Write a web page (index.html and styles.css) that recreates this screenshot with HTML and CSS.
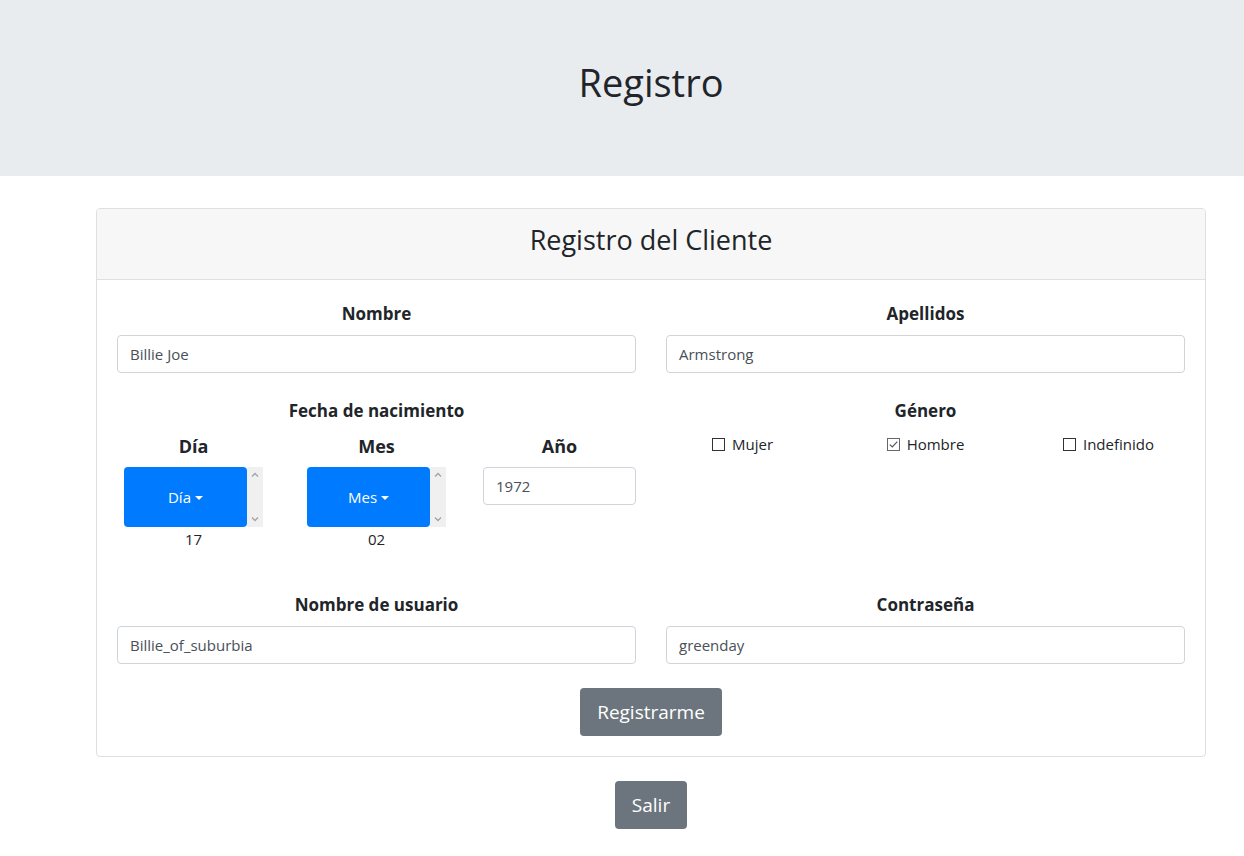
FILE: index.html
```html
<!DOCTYPE html>
<html lang="es">
<head>
<meta charset="utf-8">
<title>Registro</title>
<link rel="stylesheet" href="styles.css">
</head>
<body>
<header class="jumbotron">
  <h1 class="jumbo-title">Registro</h1>
</header>
<main class="page">
  <section class="card">
    <div class="card-header"><h2 class="card-title">Registro del Cliente</h2></div>
    <div class="card-body">
      <div class="row">
        <div class="col">
          <label class="label">Nombre</label>
          <div class="form-control">Billie Joe</div>
        </div>
        <div class="col">
          <label class="label">Apellidos</label>
          <div class="form-control">Armstrong</div>
        </div>
      </div>
      <div class="row row-date">
        <div class="col">
          <label class="label">Fecha de nacimiento</label>
          <div class="subrow">
            <div class="subcol">
              <div class="sublabel">Día</div>
              <div class="scrollbox">
                <button class="dropdown-btn">Día<span class="caret"></span></button>
                <div class="fake-scroll">
                  <svg width="16" height="60" viewBox="0 0 16 60"><path d="M5 9.5 L8 6.5 L11 9.5" fill="none" stroke="#a3a3a3" stroke-width="1.3"/><path d="M5 50.5 L8 53.5 L11 50.5" fill="none" stroke="#a3a3a3" stroke-width="1.3"/></svg>
                </div>
              </div>
              <div class="value">17</div>
            </div>
            <div class="subcol">
              <div class="sublabel">Mes</div>
              <div class="scrollbox">
                <button class="dropdown-btn">Mes<span class="caret"></span></button>
                <div class="fake-scroll">
                  <svg width="16" height="60" viewBox="0 0 16 60"><path d="M5 9.5 L8 6.5 L11 9.5" fill="none" stroke="#a3a3a3" stroke-width="1.3"/><path d="M5 50.5 L8 53.5 L11 50.5" fill="none" stroke="#a3a3a3" stroke-width="1.3"/></svg>
                </div>
              </div>
              <div class="value">02</div>
            </div>
            <div class="subcol">
              <div class="sublabel">Año</div>
              <div class="form-control">1972</div>
            </div>
          </div>
        </div>
        <div class="col">
          <label class="label">Género</label>
          <div class="subrow">
            <div class="subcol"><span class="check-item"><span class="checkbox"></span>Mujer</span></div>
            <div class="subcol"><span class="check-item"><span class="checkbox checked"><svg width="11" height="11" viewBox="0 0 11 11"><path d="M1.8 5.6 L4.3 8 L9.3 2.6" fill="none" stroke="#555" stroke-width="1.2"/></svg></span>Hombre</span></div>
            <div class="subcol"><span class="check-item"><span class="checkbox"></span>Indefinido</span></div>
          </div>
        </div>
      </div>
      <div class="row">
        <div class="col">
          <label class="label">Nombre de usuario</label>
          <div class="form-control">Billie_of_suburbia</div>
        </div>
        <div class="col">
          <label class="label">Contraseña</label>
          <div class="form-control">greenday</div>
        </div>
      </div>
      <div class="actions">
        <button class="btn-lg">Registrarme</button>
      </div>
    </div>
  </section>
  <div class="exit">
    <button class="btn-lg">Salir</button>
  </div>
</main>
</body>
</html>
```
FILE: styles.css
```css
* { box-sizing: border-box; }
html, body { margin: 0; }
body {
  font-family: "Open Sans", "Noto Sans", sans-serif;
  font-size: 16px;
  line-height: 1.5;
  color: #212529;
  background: #fff;
}
.jumbotron {
  background: #e9ecef;
  height: 176px;
  padding-left: 58px;
  display: flex;
  align-items: center;
  justify-content: center;
  margin-bottom: 32px;
}
.jumbo-title {
  margin: 0 0 12px;
  font-size: 38px;
  font-weight: 400;
  line-height: 48px;
}
.page {
  margin-left: 96px;
  width: 1110px;
}
.card {
  border: 1px solid #dfdfdf;
  border-radius: 4px;
  overflow: hidden;
}
.card-header {
  background: #f7f7f7;
  border-bottom: 1px solid #dfdfdf;
  height: 71px;
  display: flex;
  align-items: center;
  justify-content: center;
}
.card-title {
  margin: 0 0 9px;
  font-size: 27px;
  font-weight: 400;
  line-height: 34px;
}
.card-body {
  padding: 20px 20px 20px;
}
.row {
  display: flex;
  gap: 30px;
  margin-bottom: 24px;
}
.col {
  flex: 1 1 0;
  min-width: 0;
  text-align: center;
}
.label {
  display: block;
  font-weight: 700;
  font-size: 17px;
  line-height: 27px;
  margin-bottom: 8px;
}
.form-control {
  height: 38px;
  border: 1px solid #ced4da;
  border-radius: 4px;
  padding: 0 12px;
  font-size: 15px;
  line-height: 36px;
  color: #495057;
  text-align: left;
}
.row-date { margin-bottom: 40px; }
.subrow {
  display: flex;
  gap: 30px;
}
.subcol {
  flex: 1 1 0;
  min-width: 0;
  display: flex;
  flex-direction: column;
  align-items: center;
}
.subcol > .form-control { width: 100%; }
.sublabel {
  font-weight: 700;
  font-size: 18px;
  line-height: 24px;
  margin: 2px 0 9px;
}
.scrollbox {
  display: flex;
  width: 139px;
  height: 60px;
}
.dropdown-btn {
  width: 123px;
  height: 60px;
  border: 0;
  border-radius: 4px;
  background: #007bff;
  color: #fff;
  font-family: inherit;
  font-size: 15px;
  padding: 0;
  display: flex;
  align-items: center;
  justify-content: center;
}
.caret {
  display: inline-block;
  margin-left: 4px;
  border-top: 4.5px solid #fff;
  border-left: 4.5px solid transparent;
  border-right: 4.5px solid transparent;
  margin-top: 2px;
}
.fake-scroll {
  width: 16px;
  height: 60px;
  background: #f0f0f0;
}
.fake-scroll svg { display: block; }
.value {
  font-size: 15px;
  line-height: 24px;
}
.check-item {
  display: inline-flex;
  align-items: center;
  font-size: 15px;
  line-height: 24px;
}
.checkbox {
  width: 13px;
  height: 13px;
  border: 1px solid #333;
  margin-right: 7px;
  display: inline-flex;
  align-items: center;
  justify-content: center;
  background: #fff;
}
.checkbox.checked { border-color: #666; }
.checkbox svg { display: block; }
.actions {
  display: flex;
  justify-content: center;
}
.btn-lg {
  height: 48px;
  padding: 0 17px;
  border: 0;
  border-radius: 4px;
  background: #6c757d;
  color: #fff;
  font-family: inherit;
  font-size: 19px;
  line-height: 48px;
}
.exit {
  display: flex;
  justify-content: center;
  margin-top: 24px;
}
```
